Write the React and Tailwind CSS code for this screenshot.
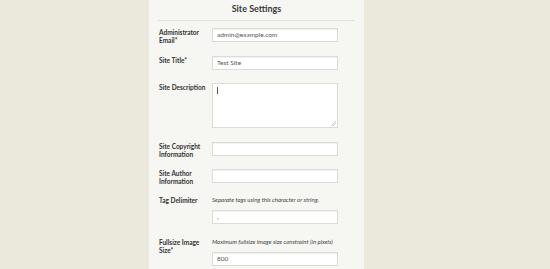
import React from 'react'

const font = { fontFamily: 'Lato, "Open Sans", sans-serif' }

function Row({ label, help, children, className = '' }) {
  return (
    <div className={`flex ${className}`}>
      <div className="w-[53px] h-[14px] shrink-0 pt-[1px] text-[6.5px] leading-[8px] font-bold text-[#333]">
        {label}
      </div>
      <div className="flex flex-col">
        {help && (
          <p className="h-[8px] mb-[6px] text-[6px] leading-[8px] italic text-[#444]">{help}</p>
        )}
        {children}
      </div>
    </div>
  )
}

function Field({ value = '' }) {
  return (
    <div className="w-[126px] h-[14px] bg-white border border-[#dcdcd6] shadow-[inset_0_1px_1px_rgba(0,0,0,0.06)] px-[4px] flex items-center text-[6.5px] text-[#555]">
      {value}
    </div>
  )
}

export default function App() {
  return (
    <div className="w-[550px] h-[269px] overflow-hidden bg-[#ebe8dc]" style={font}>
      <div className="ml-[149px] w-[215px] h-full bg-[#f6f6f2] px-[9px]">
        <h1 className="h-[21px] pt-[3px] text-center text-[9px] leading-[11px] font-bold text-[#3a3a3a] border-b border-[#e2e2da]">
          Site Settings
        </h1>
        <div className="pl-[1px] flex flex-col">
          <Row label="Administrator Email*" className="mt-[7px]">
            <Field value="admin@example.com" />
          </Row>
          <Row label="Site Title*" className="mt-[14px]">
            <Field value="Test Site" />
          </Row>
          <Row label="Site Description" className="mt-[13px]">
            <div className="w-[126px] h-[45px] bg-white border border-[#dcdcd6] relative">
              <span className="absolute left-[4px] top-[3px] w-px h-[7px] bg-[#555]" />
              <svg className="absolute right-[1px] bottom-[1px]" width="5" height="5" viewBox="0 0 5 5">
                <path d="M5 0 L0 5 M5 2 L2 5" stroke="#bbb" strokeWidth="0.8" />
              </svg>
            </div>
          </Row>
          <Row label="Site Copyright Information" className="mt-[14px]">
            <Field />
          </Row>
          <Row label="Site Author Information" className="mt-[13px]">
            <Field />
          </Row>
          <Row label="Tag Delimiter" help="Separate tags using this character or string." className="mt-[13px]">
            <Field value="," />
          </Row>
          <Row label="Fullsize Image Size*" help="Maximum fullsize image size constraint (in pixels)" className="mt-[14px]">
            <Field value="800" />
          </Row>
        </div>
      </div>
    </div>
  )
}
